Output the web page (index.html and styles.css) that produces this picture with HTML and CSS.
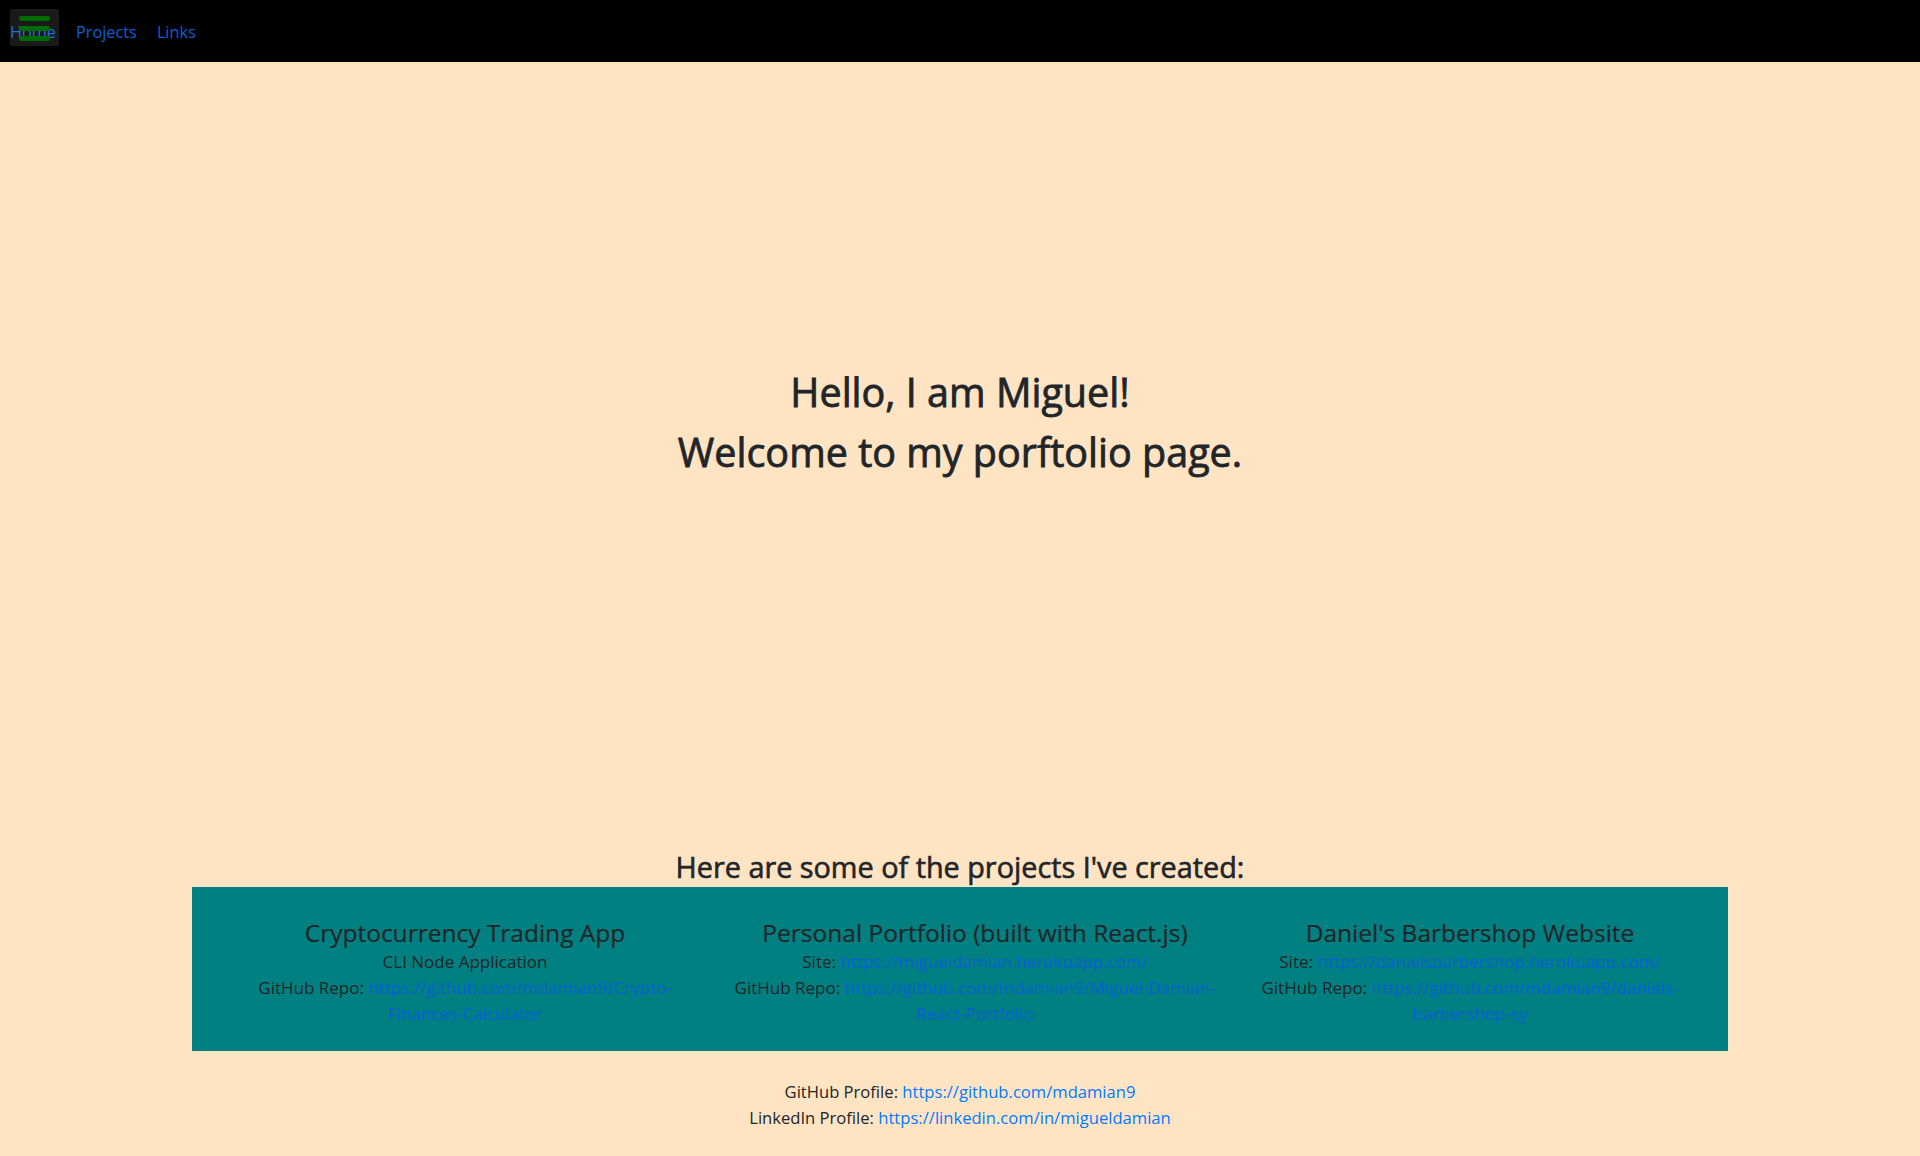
FILE: index.html
```html
<!DOCTYPE html>
<html lang="en">
<head>
<meta charset="utf-8">
<title>Miguel Damian - Portfolio</title>
<link rel="stylesheet" href="styles.css">
</head>
<body>
<nav class="navbar">
  <button class="toggler" aria-label="Toggle navigation">
    <span class="bar"></span><span class="bar"></span><span class="bar"></span>
  </button>
  <a class="nav-link" href="#">Home</a>
  <a class="nav-link" href="#">Projects</a>
  <a class="nav-link" href="#">Links</a>
</nav>

<section class="hero">
  <h1 class="hero-title">Hello, I am Miguel!<br>Welcome to my porftolio page.</h1>
</section>

<h2 class="projects-heading">Here are some of the projects I've created:</h2>

<section class="projects">
  <div class="project">
    <h3 class="project-title">Cryptocurrency Trading App</h3>
    <p class="project-line">CLI Node Application</p>
    <p class="project-line">GitHub Repo: <a href="#">https://github.com/mdamian9/Crypto-Finances-Calculator</a></p>
  </div>
  <div class="project">
    <h3 class="project-title">Personal Portfolio (built with React.js)</h3>
    <p class="project-line">Site: <a href="#">https://migueldamian.herokuapp.com/</a></p>
    <p class="project-line">GitHub Repo: <a href="#">https://github.com/mdamian9/Miguel-Damian-React-Portfolio</a></p>
  </div>
  <div class="project">
    <h3 class="project-title">Daniel's Barbershop Website</h3>
    <p class="project-line">Site: <a href="#">https://danielsbarbershop.herokuapp.com/</a></p>
    <p class="project-line">GitHub Repo: <a href="#">https://github.com/mdamian9/daniels-barbershop-sy</a></p>
  </div>
</section>

<footer class="footer">
  <p class="footer-line">GitHub Profile: <a href="#">https://github.com/mdamian9</a></p>
  <p class="footer-line">LinkedIn Profile: <a href="#">https://linkedin.com/in/migueldamian</a></p>
</footer>
</body>
</html>
```
FILE: styles.css
```css
* { box-sizing: border-box; }

html, body {
  margin: 0;
  padding: 0;
}

body {
  background: #ffe4c4;
  color: #212529;
  font-family: "Open Sans", "Noto Sans", "Liberation Sans", sans-serif;
  font-size: 16px;
  line-height: 26px;
  overflow: hidden;
}

a {
  color: #007bff;
  text-decoration: none;
}

.navbar {
  position: relative;
  height: 62px;
  background: #000;
  display: flex;
  align-items: center;
}

.nav-link {
  font-size: 16.3px;
  line-height: 24px;
  padding: 0 10px;
  margin-top: 1px;
  color: #0a5fd8;
}

.toggler {
  position: absolute;
  left: 10px;
  top: 9px;
  width: 49px;
  height: 37px;
  padding: 7px 0 0 9px;
  border: 0;
  border-radius: 2px;
  background: rgba(255, 255, 255, 0.1);
  display: flex;
  flex-direction: column;
  gap: 5px;
  z-index: 2;
}

.bar {
  display: block;
  width: 31px;
  height: 5px;
  border-radius: 2px;
  background: #006b00;
}

.hero {
  padding-top: 300px;
  text-align: center;
}

.hero-title {
  margin: 0;
  font-size: 39.5px;
  line-height: 60px;
  font-weight: 400;
  -webkit-text-stroke: 0.8px #212529;
}

.projects-heading {
  margin: 368px 0 0;
  text-align: center;
  font-size: 28.8px;
  line-height: 34px;
  font-weight: 400;
  -webkit-text-stroke: 0.6px #212529;
}

.projects {
  width: 80%;
  margin: 3px auto 0;
  background: #008080;
  padding: 29px 43px 24px;
  display: grid;
  grid-template-columns: 460fr 505fr 430fr;
  column-gap: 27.5px;
  text-align: center;
}

.projects a {
  color: #0a5fd8;
}

.project-title {
  margin: 0;
  font-size: 24.5px;
  line-height: 33px;
  font-weight: 400;
  -webkit-text-stroke: 0.2px #212529;
}

.project-line {
  margin: 0;
  font-size: 17px;
  line-height: 26px;
}

.footer {
  margin-top: 28px;
  text-align: center;
}

.footer-line {
  margin: 0;
  font-size: 16.6px;
  line-height: 26px;
}
```
